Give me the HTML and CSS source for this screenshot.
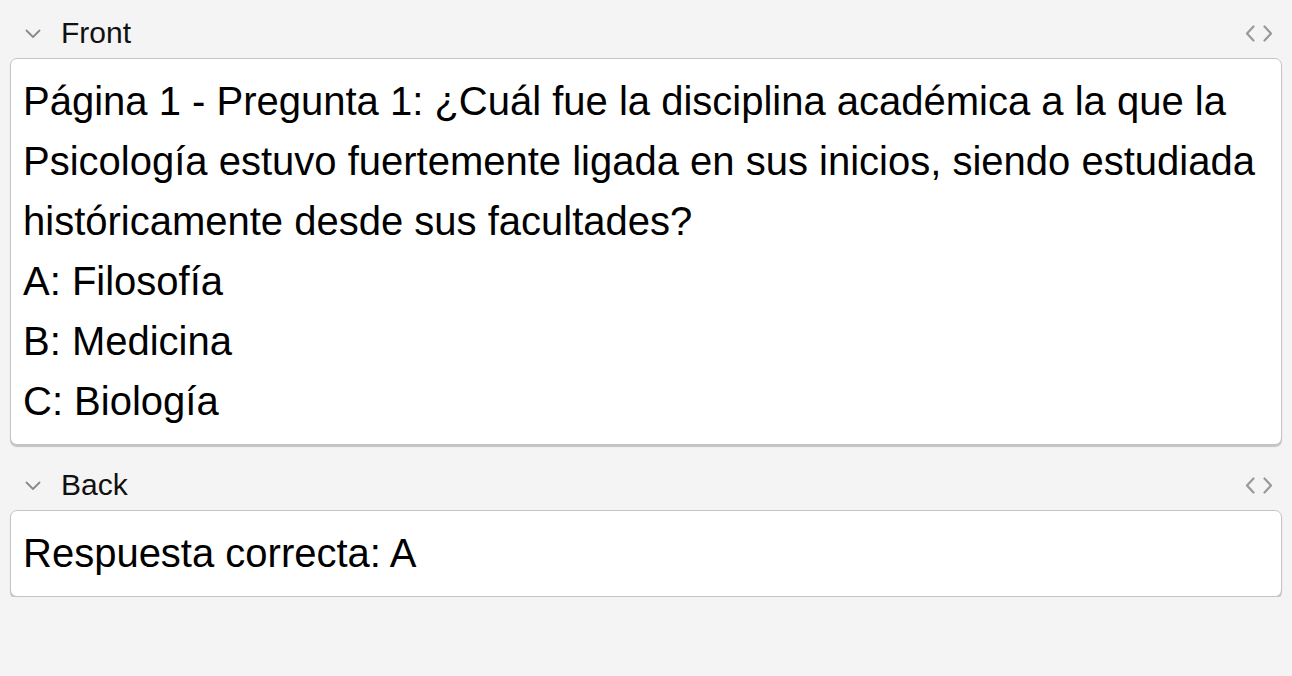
FILE: index.html
```html
<!DOCTYPE html>
<html lang="es">
<head>
<meta charset="utf-8">
<title>Editor</title>
<link rel="stylesheet" href="styles.css">
</head>
<body>
<div class="editor">
  <section class="field">
    <div class="field-header">
      <span class="collapse">
        <svg width="16" height="10" viewBox="0 0 16 10"><path d="M1.5 1.5 L8 8 L14.5 1.5" fill="none" stroke="#8a8a8a" stroke-width="1.8" stroke-linecap="round" stroke-linejoin="round"/></svg>
      </span>
      <span class="label">Front</span>
      <span class="code-toggle">
        <svg width="28" height="17" viewBox="0 0 28 17"><path d="M8.5 1.5 L2 8.5 L8.5 15.5 M19.5 1.5 L26 8.5 L19.5 15.5" fill="none" stroke="#999" stroke-width="2.2" stroke-linecap="round" stroke-linejoin="round"/></svg>
      </span>
    </div>
    <div class="field-box">
      <div>Página 1 - Pregunta 1: ¿Cuál fue la disciplina académica a la que la Psicología estuvo fuertemente ligada en sus inicios, siendo estudiada históricamente desde sus facultades?</div>
      <div>A: Filosofía</div>
      <div>B: Medicina</div>
      <div>C: Biología</div>
    </div>
  </section>
  <section class="field">
    <div class="field-header">
      <span class="collapse">
        <svg width="16" height="10" viewBox="0 0 16 10"><path d="M1.5 1.5 L8 8 L14.5 1.5" fill="none" stroke="#8a8a8a" stroke-width="1.8" stroke-linecap="round" stroke-linejoin="round"/></svg>
      </span>
      <span class="label">Back</span>
      <span class="code-toggle">
        <svg width="28" height="17" viewBox="0 0 28 17"><path d="M8.5 1.5 L2 8.5 L8.5 15.5 M19.5 1.5 L26 8.5 L19.5 15.5" fill="none" stroke="#999" stroke-width="2.2" stroke-linecap="round" stroke-linejoin="round"/></svg>
      </span>
    </div>
    <div class="field-box">
      <div>Respuesta correcta: A</div>
    </div>
  </section>
</div>
</body>
</html>
```

FILE: styles.css
```css
html, body {
  margin: 0;
  padding: 0;
  background: #f4f4f4;
}
body {
  font-family: "Liberation Sans", Arial, Helvetica, sans-serif;
  color: #000;
}
.editor {
  padding: 8px 10px 0 10px;
  display: flex;
  flex-direction: column;
  gap: 15px;
}
.field {
  display: flex;
  flex-direction: column;
}
.field-header {
  height: 50px;
  display: flex;
  align-items: center;
  padding: 0 9px 0 15px;
}
.collapse {
  display: flex;
  align-items: center;
  width: 36px;
  padding-top: 2px;
}
.label {
  font-size: 30px;
  flex: 1;
  color: #111;
}
.code-toggle {
  display: flex;
  align-items: center;
}
.field-box {
  background: #fff;
  border: 1px solid #c4c4c4;
  border-radius: 7px;
  box-shadow: 0 2px 1px rgba(0, 0, 0, 0.2);
  padding: 12px 12px 13px 12px;
  font-size: 40px;
  line-height: 60px;
}
```
